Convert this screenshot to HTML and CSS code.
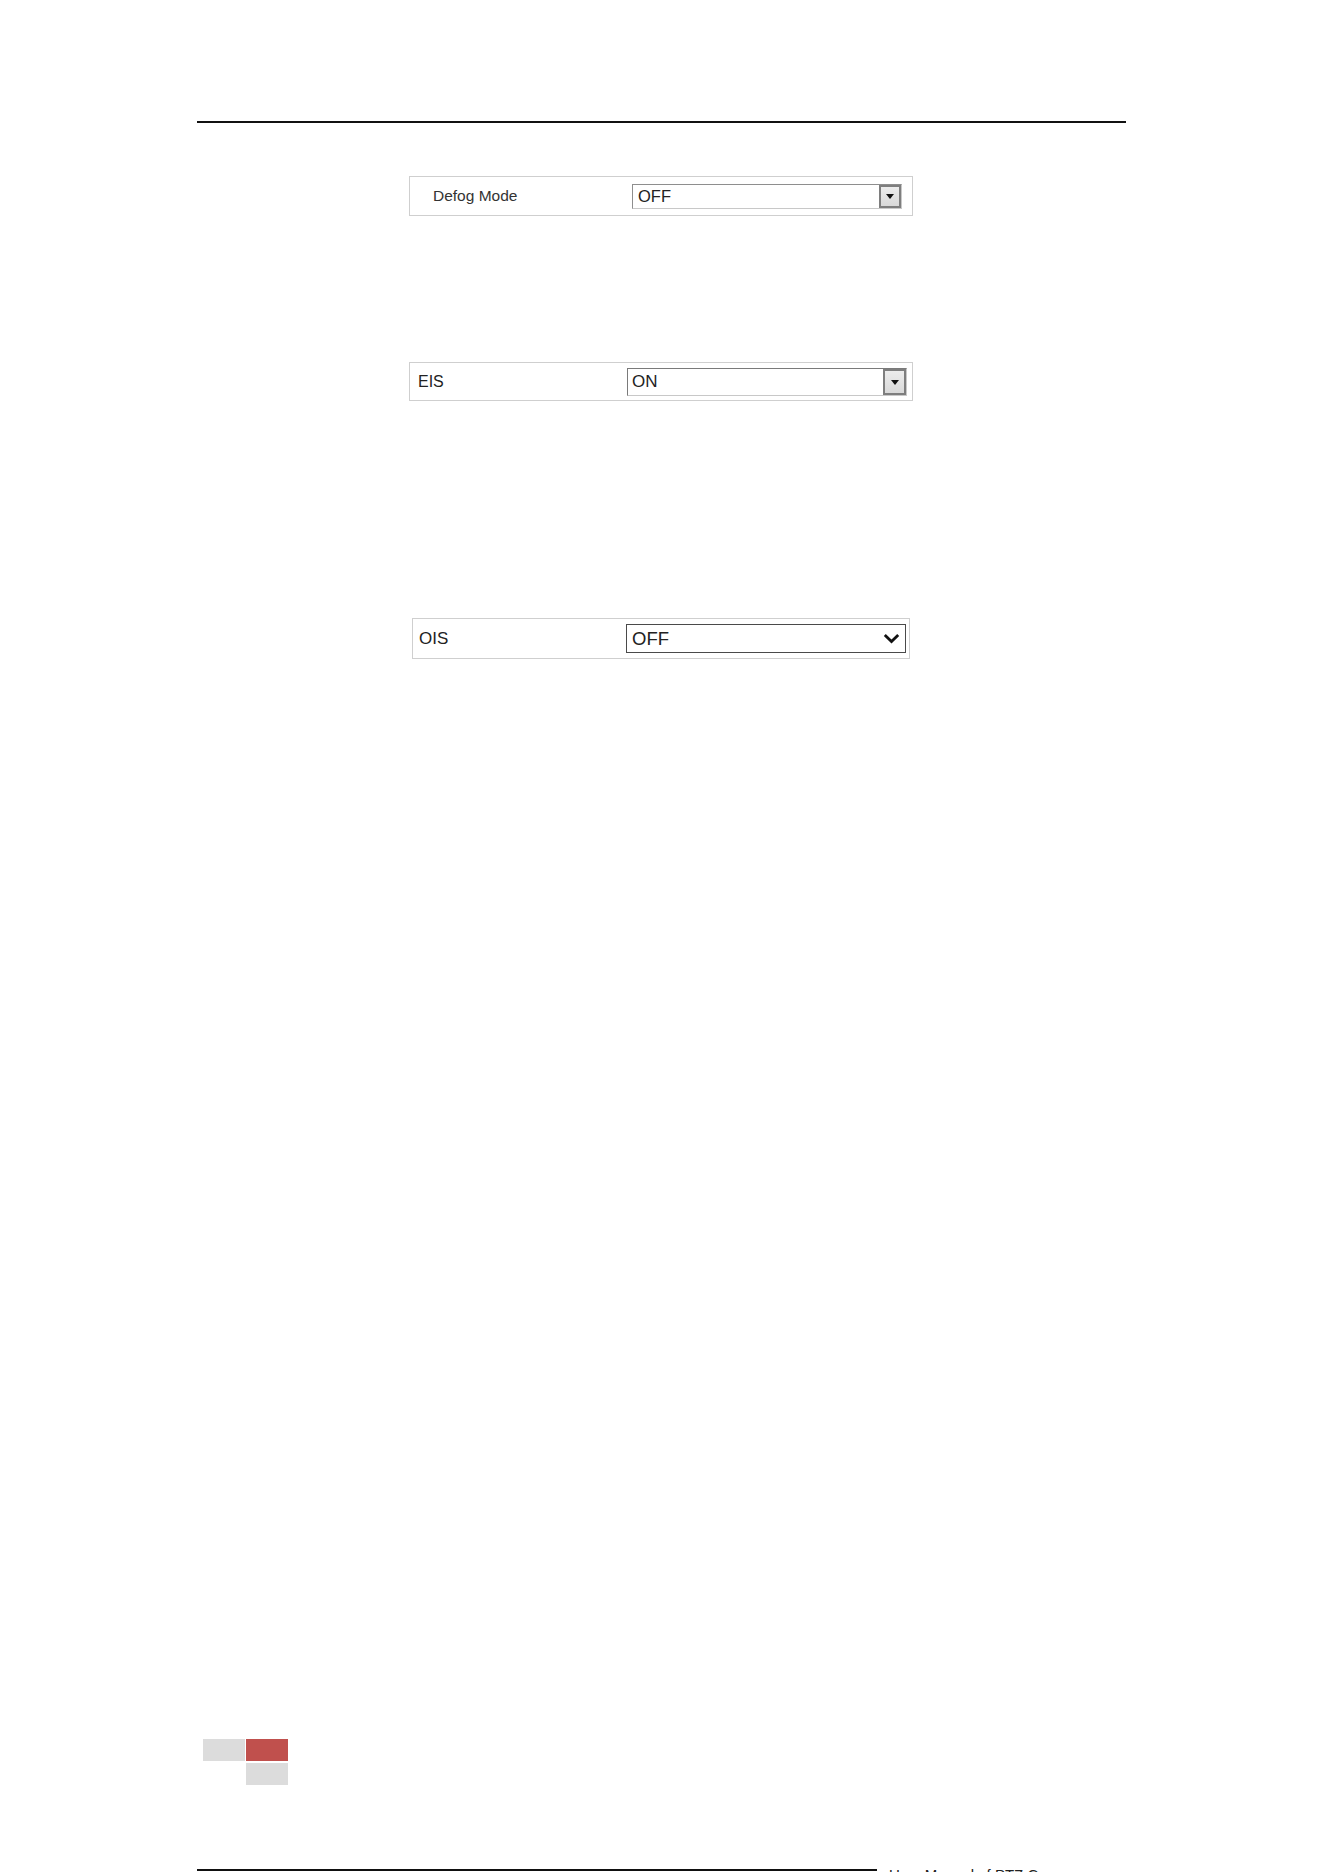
FILE: index.html
```html
<!DOCTYPE html>
<html>
<head>
<meta charset="utf-8">
<link rel="stylesheet" href="styles.css">
</head>
<body>
<div class="page">
  <div class="header-rule"></div>

  <div class="panel panel-defog">
    <div class="label label-defog">Defog Mode</div>
    <div class="select select-defog">
      <span class="value value-defog">OFF</span>
      <span class="btn btn-defog"><span class="tri"></span></span>
    </div>
  </div>

  <div class="panel panel-eis">
    <div class="label label-eis">EIS</div>
    <div class="select select-eis">
      <span class="value value-eis">ON</span>
      <span class="btn btn-eis"><span class="tri"></span></span>
    </div>
  </div>

  <div class="panel panel-ois">
    <div class="label label-ois">OIS</div>
    <div class="select select-ois">
      <span class="value value-ois">OFF</span>
      <svg class="chevron" width="17" height="11" viewBox="0 0 17 11"><path d="M1.8 2 L8.5 8.6 L15.2 2" fill="none" stroke="#111" stroke-width="2.8"/></svg>
    </div>
  </div>

  <div class="blocks">
    <div class="block-row">
      <span class="sq sq-gray"></span>
      <span class="sq sq-red"></span>
    </div>
    <div class="block-row">
      <span class="sq sq-empty"></span>
      <span class="sq sq-gray"></span>
    </div>
  </div>

  <div class="footer">
    <div class="footer-rule"></div>
    <span class="footer-text">User Manual of PTZ Camera</span>
  </div>
</div>
</body>
</html>
```

FILE: styles.css
```css
html, body {
  margin: 0;
  padding: 0;
  background: #fff;
  overflow: hidden;
}
.page {
  width: 1324px;
  height: 1872px;
  overflow: hidden;
  padding-top: 121px;
  box-sizing: border-box;
  font-family: "Liberation Sans", Arial, sans-serif;
  color: #222;
}
.header-rule {
  margin-left: 197px;
  width: 929px;
  height: 2px;
  background: #111;
}
.panel {
  box-sizing: border-box;
  border: 1px solid #cfcfcf;
  display: flex;
  align-items: center;
  height: 40px;
}
.panel-defog {
  margin-top: 53px;
  margin-left: 409px;
  width: 504px;
}
.panel-eis {
  margin-top: 146px;
  margin-left: 409px;
  width: 504px;
  height: 39px;
}
.panel-ois {
  margin-top: 217px;
  margin-left: 412px;
  width: 498px;
  height: 41px;
}
.label {
  flex: none;
}
.label-defog {
  width: 199px;
  padding-left: 23px;
  font-size: 15.5px;
  color: #333;
}
.label-eis {
  width: 209px;
  padding-left: 8px;
  font-size: 16px;
}
.label-ois {
  width: 207px;
  padding-left: 6px;
  font-size: 17px;
}
.select {
  box-sizing: border-box;
  display: flex;
  align-items: center;
  background: #fff;
}
.select-defog {
  width: 270px;
  height: 25px;
  border: 1px solid #8e8e8e;
  border-right-color: #c8c8c8;
  border-bottom-color: #c8c8c8;
}
.select-eis {
  width: 280px;
  height: 28px;
  border: 1px solid #7a7a7a;
  border-right-color: #c8c8c8;
  border-bottom-color: #c8c8c8;
}
.select-ois {
  width: 280px;
  height: 29px;
  border: 1px solid #4a4a4a;
}
.value {
  flex: 1;
  color: #222;
}
.value-defog {
  padding-left: 5px;
  font-size: 16.5px;
}
.value-eis {
  padding-left: 4px;
  font-size: 17px;
}
.value-ois {
  padding-left: 5px;
  font-size: 18.5px;
}
.btn {
  box-sizing: border-box;
  height: 100%;
  border: 2px solid #7e7e7e;
  background: linear-gradient(#ececec, #d9d9d9);
  display: flex;
  align-items: center;
  justify-content: center;
  flex: none;
}
.btn-defog {
  width: 22px;
}
.btn-eis {
  width: 23px;
}
.tri {
  width: 0;
  height: 0;
  border-left: 4px solid transparent;
  border-right: 4px solid transparent;
  border-top: 5px solid #111;
  margin-top: 1px;
}
.chevron {
  margin-right: 5px;
  flex: none;
}
.blocks {
  margin-top: 1080px;
  margin-left: 203px;
  display: flex;
  flex-direction: column;
  gap: 2px;
}
.block-row {
  display: flex;
  gap: 1px;
}
.sq {
  width: 42px;
  height: 22px;
  display: block;
}
.sq-gray {
  background: #dcdcdc;
}
.sq-red {
  background: #c0504d;
}
.sq-empty {
  background: transparent;
}
.footer {
  margin-top: 78px;
  margin-left: 197px;
  display: flex;
  align-items: flex-start;
}
.footer-rule {
  margin-top: 6px;
  width: 680px;
  height: 2px;
  background: #111;
}
.footer-text {
  margin-left: 12px;
  margin-top: 3px;
  font-size: 15px;
  line-height: 18px;
  color: #222;
}
```
